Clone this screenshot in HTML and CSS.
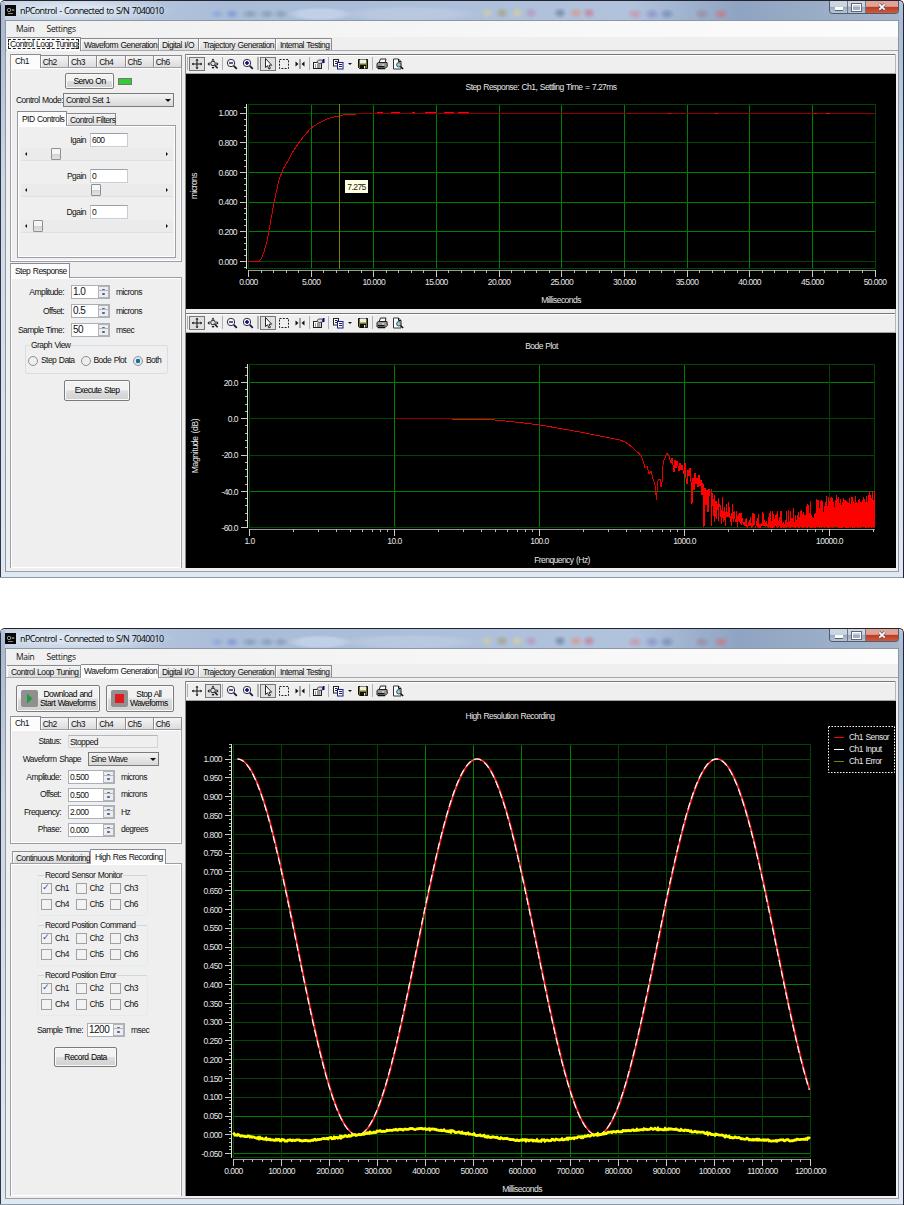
FILE: index.html
```html
<!DOCTYPE html>
<html lang="en">
<head>
  <meta charset="UTF-8">
  <title>nPControl</title>
  <link rel="stylesheet" href="styles.css">
</head>
<body>
  <!-- toolbar icons, drawn on a 16x16 grid -->
  <svg width="0" height="0" class="defs">
    <symbol id="i-pan" viewBox="0 0 16 16"><path d="M8 3.5v9M3.5 8h9" stroke="#111" fill="none"/><path d="M6.5 4.5L8 2.8l1.5 1.7zM6.5 11.5L8 13.2l1.5-1.7zM4.5 6.5L2.8 8l1.7 1.5zM11.5 6.5L13.2 8l-1.7 1.5z" fill="#111"/></symbol>
    <symbol id="i-zoomaxis" viewBox="0 0 16 16"><path d="M6.5 4.5L8 2.5l1.500 2zM4.500 6L2.500 8l2 2zM11.500 6l2 2-2 2zM6.500 11L8 13l1.500-2z" fill="#111"/><circle cx="8" cy="7.500" r="2.300" fill="#cfe3e8" stroke="#222"/><path d="M9.800 9.300l2.800 2.900" stroke="#15153a" stroke-width="1.600"/></symbol>
    <symbol id="i-zoomout" viewBox="0 0 16 16"><circle cx="7" cy="7" r="3.700" fill="#f6f6f6" stroke="#333"/><path d="M5 7h4" stroke="#00007a" stroke-width="1.300"/><path d="M9.800 9.800l3 3" stroke="#15153a" stroke-width="1.800"/></symbol>
    <symbol id="i-zoomin" viewBox="0 0 16 16"><circle cx="7" cy="7" r="3.700" fill="#f6f6f6" stroke="#333"/><path d="M5 7h4M7 5v4" stroke="#00008a" stroke-width="1.500"/><path d="M9.800 9.800l3 3" stroke="#15153a" stroke-width="1.800"/></symbol>
    <symbol id="i-cursor" viewBox="0 0 16 16"><path d="M5.500 2.500v9l2-1.800 1.400 3.300 1.500-.7-1.400-3.100h2.700z" fill="#fff" stroke="#111" stroke-width=".9"/></symbol>
    <symbol id="i-select" viewBox="0 0 16 16"><rect x="3.500" y="3.500" width="9" height="9" fill="none" stroke="#222" stroke-dasharray="2 1.300"/></symbol>
    <symbol id="i-split" viewBox="0 0 16 16"><path d="M8 3v10" stroke="#555"/><path d="M3.500 5.500L6.500 8l-3 2.500zM12.500 5.500L9.500 8l3 2.500z" fill="#111"/></symbol>
    <symbol id="i-props" viewBox="0 0 16 16"><rect x="2.500" y="6.500" width="8" height="6" fill="#fff" stroke="#222"/><path d="M4 9h1M6 9h3.500M4 11h1M6 11h3.500" stroke="#333"/><path d="M5.500 6.500l2-2.500h4v3l-3 .5z" fill="#ddd" stroke="#222" stroke-width=".8"/><path d="M12.700 3v4" stroke="#00008a" stroke-width="1.600"/></symbol>
    <symbol id="i-copy" viewBox="0 0 16 16"><rect x="3.500" y="3.500" width="5" height="6.500" fill="#fff" stroke="#222"/><path d="M5 5.500h2.500M5 7.500h2.500" stroke="#222"/><rect x="7.500" y="6.500" width="5.500" height="6.500" fill="#fff" stroke="#1a1a80"/><path d="M9 8.500h3M9 10.500h3" stroke="#1a1a80"/></symbol>
    <symbol id="i-save" viewBox="0 0 16 16"><path d="M3.500 3.500h9v9h-8l-1-1z" fill="#77771a" stroke="#111"/><rect x="5" y="3.500" width="6" height="4" fill="#eee"/><rect x="5" y="9" width="6" height="4" fill="#111"/><rect x="9" y="10" width="1.300" height="2.500" fill="#eee"/></symbol>
    <symbol id="i-print" viewBox="0 0 16 16"><path d="M5 7l1.500-4h5.500l-1 4" fill="#fff" stroke="#222"/><path d="M3 7.500l1.500-1H13l.3 4-1.800 1.500H3z" fill="#999" stroke="#222"/><path d="M4 10.500h6.500M4 12.700h7" stroke="#111" stroke-width="1.200"/><path d="M8 9h2" stroke="#eee"/></symbol>
    <symbol id="i-preview" viewBox="0 0 16 16"><path d="M3.500 3h5l2.500 2.500v7.500h-7.500z" fill="#fff" stroke="#333"/><path d="M8.500 3v2.500h2.500" fill="none" stroke="#111"/><circle cx="8.800" cy="8.800" r="2.200" fill="#7fd8dc" stroke="#444"/><path d="M10.500 10.500l2.700 2.500" stroke="#111" stroke-width="1.500"/></symbol>
  </svg>

  <div class="window">
    <div class="titlebar">
      <svg class="app-icon" viewBox="0 0 11 11"><rect width="11" height="11" fill="#080808"/><circle cx="4" cy="5" r="1.700" fill="none" stroke="#bbb" stroke-width=".8"/><path d="M6.500 5h3M8 4v2M3 8.500h5" stroke="#aaa" stroke-width=".8"/></svg>
      <span class="title">nPControl - Connected to S/N 7040010</span>
      <div class="caption"><i class="min"></i><i class="max"></i><i class="close"><svg viewBox="0 0 10 8"><path d="M2.300 1.300l5.400 5.400M7.700 1.300L2.300 6.700" stroke="#445" stroke-width="3"/><path d="M2.300 1.300l5.400 5.400M7.700 1.300L2.300 6.700" stroke="#fff" stroke-width="1.900"/></svg></i></div>
    </div>
    <div class="client">
      <div class="menu"><span>Main</span><span>Settings</span></div>
      <div class="main-tabs">
        <div class="tab t1 active focus"><span>Control Loop Tuning</span></div>
        <div class="tab t2">Waveform Generation</div>
        <div class="tab t3">Digital I/O</div>
        <div class="tab t4">Trajectory Generation</div>
        <div class="tab t5">Internal Testing</div>
      </div>
      <div class="body">
        <div class="side">
          <div class="ch-tabs"><div class="tab active">Ch1</div><div class="tab">Ch2</div><div class="tab">Ch3</div><div class="tab">Ch4</div><div class="tab">Ch5</div><div class="tab">Ch6</div></div>
          <div class="panel loop">
            <div class="servo"><button>Servo On</button><i class="led"></i></div>
            <div class="mode"><label>Control Mode:</label><div class="combo">Control Set 1</div></div>
            <div class="sub-tabs"><div class="tab active">PID Controls</div><div class="tab">Control Filters</div></div>
            <div class="panel pid">
              <div class="gain"><label>Igain</label><div class="field">600</div></div>
              <div class="slider"><i style="margin-left:30px"></i></div>
              <div class="gain"><label>Pgain</label><div class="field">0</div></div>
              <div class="slider"><i style="margin-left:70px"></i></div>
              <div class="gain"><label>Dgain</label><div class="field">0</div></div>
              <div class="slider"><i style="margin-left:12px"></i></div>
            </div>
          </div>
          <div class="step-tabs"><div class="tab active">Step Response</div></div>
          <div class="panel step">
            <div class="row"><label>Amplitude:</label><div class="spin big">1.0</div><span>microns</span></div>
            <div class="row"><label>Offset:</label><div class="spin big">0.5</div><span>microns</span></div>
            <div class="row"><label>Sample Time:</label><div class="spin big">50</div><span>msec</span></div>
            <fieldset class="view">
              <legend>Graph View</legend>
              <div class="radio">Step Data</div><div class="radio">Bode Plot</div><div class="radio on">Both</div>
            </fieldset>
            <button class="execute">Execute Step</button>
          </div>
        </div>
        <div class="graphs">
          <div class="toolbar"></div>
          <svg id="stepPlot" class="plot" width="710" height="235" viewBox="186 74 710 235"></svg>
          <div class="toolbar second"></div>
          <svg id="bodePlot" class="plot" width="710" height="235" viewBox="186 333 710 235"></svg>
        </div>
      </div>
    </div>
  </div>

  <div class="window lower">
    <div class="titlebar">
      <svg class="app-icon" viewBox="0 0 11 11"><rect width="11" height="11" fill="#080808"/><circle cx="4" cy="5" r="1.700" fill="none" stroke="#bbb" stroke-width=".8"/><path d="M6.500 5h3M8 4v2M3 8.500h5" stroke="#aaa" stroke-width=".8"/></svg>
      <span class="title">nPControl - Connected to S/N 7040010</span>
      <div class="caption"><i class="min"></i><i class="max"></i><i class="close"><svg viewBox="0 0 10 8"><path d="M2.300 1.300l5.400 5.400M7.700 1.300L2.300 6.700" stroke="#445" stroke-width="3"/><path d="M2.300 1.300l5.400 5.400M7.700 1.300L2.300 6.700" stroke="#fff" stroke-width="1.900"/></svg></i></div>
    </div>
    <div class="client">
      <div class="menu"><span>Main</span><span>Settings</span></div>
      <div class="main-tabs">
        <div class="tab t1">Control Loop Tuning</div>
        <div class="tab t2 active">Waveform Generation</div>
        <div class="tab t3">Digital I/O</div>
        <div class="tab t4">Trajectory Generation</div>
        <div class="tab t5">Internal Testing</div>
      </div>
      <div class="body">
        <div class="side">
          <div class="actions">
            <button class="start"><svg viewBox="0 0 17 17"><rect width="17" height="17" rx="2" fill="#909090"/><path d="M6 3.500l5.500 5-5.500 5z" fill="#1f9a3c"/></svg><span>Download and<br>Start Waveforms</span></button>
            <button class="stop"><svg viewBox="0 0 17 17"><rect width="17" height="17" rx="2" fill="#909090"/><rect x="4" y="4" width="9" height="9" fill="#e01b1b"/></svg><span>Stop All<br>Waveforms</span></button>
          </div>
          <div class="ch-tabs shifted"><div class="tab active">Ch1</div><div class="tab">Ch2</div><div class="tab">Ch3</div><div class="tab">Ch4</div><div class="tab">Ch5</div><div class="tab">Ch6</div></div>
          <div class="panel wave">
            <div class="row status"><label>Status:</label><div class="readonly">Stopped</div></div>
            <div class="row shape"><label>Waveform Shape</label><div class="combo">Sine Wave</div></div>
            <div class="row"><label>Amplitude:</label><div class="spin">0.500</div><span>microns</span></div>
            <div class="row"><label>Offset:</label><div class="spin">0.500</div><span>microns</span></div>
            <div class="row"><label>Frequency:</label><div class="spin">2.000</div><span>Hz</span></div>
            <div class="row"><label>Phase:</label><div class="spin">0.000</div><span>degrees</span></div>
          </div>
          <div class="rec-tabs"><div class="tab">Continuous Monitoring</div><div class="tab active">High Res Recording</div></div>
          <div class="panel rec">
            <fieldset><legend>Record Sensor Monitor</legend>
              <div class="check on">Ch1</div><div class="check">Ch2</div><div class="check">Ch3</div>
              <div class="check">Ch4</div><div class="check">Ch5</div><div class="check">Ch6</div>
            </fieldset>
            <fieldset><legend>Record Position Command</legend>
              <div class="check on">Ch1</div><div class="check">Ch2</div><div class="check">Ch3</div>
              <div class="check">Ch4</div><div class="check">Ch5</div><div class="check">Ch6</div>
            </fieldset>
            <fieldset><legend>Record Position Error</legend>
              <div class="check on">Ch1</div><div class="check">Ch2</div><div class="check">Ch3</div>
              <div class="check">Ch4</div><div class="check">Ch5</div><div class="check">Ch6</div>
            </fieldset>
            <div class="row"><label>Sample Time:</label><div class="spin big">1200</div><span>msec</span></div>
            <button class="record">Record Data</button>
          </div>
        </div>
        <div class="graphs">
          <div class="toolbar zoomed"></div>
          <svg id="wavePlot" class="plot" width="710" height="495" viewBox="186 701 710 495"></svg>
        </div>
      </div>
    </div>
  </div>

  <script src="plots.js"></script>
</body>
</html>
```
FILE: styles.css
```css
* { box-sizing: border-box; }
body {
  margin: 0;
  background: #fff;
  color: #111;
  font: 8.5px/11px "Liberation Sans", sans-serif;
  letter-spacing: -.55px;
  word-spacing: .7px;
  overflow: hidden;
}
.defs { position: absolute; }
svg { display: block; }

/* window frame */
.window {
  width: 904px;
  height: 578px;
  padding: 0 4px 6px 5px;
  border: solid #23232d;
  border-width: 1px 1px 0 0;
  border-radius: 5px 5px 0 0;
  background:
    linear-gradient(90deg, #33343c 0 1px, transparent 1px),
    linear-gradient(#b0c1d9 0, #a9bad2 22px, #cbd8ea 180px, #dfe9f5 100%);
  box-shadow: inset 0 -1px #8d99a8, inset 0 1px #e4ecf6;
}
.lower { margin-top: 50px; height: 577px; }
.titlebar {
  display: flex;
  height: 19px;
  align-items: center;
  background:
    radial-gradient(ellipse 100px 14px at 70px 9px, #e3ebf5cc 30%, transparent),
    radial-gradient(ellipse 7px 5px at 212px 13px, #6f95d877, transparent),
    radial-gradient(ellipse 7px 5px at 227px 13px, #6080d088, transparent),
    radial-gradient(ellipse 9px 5px at 245px 13px, #6d7d9877, transparent),
    radial-gradient(ellipse 8px 5px at 262px 13px, #6d7d9877, transparent),
    radial-gradient(ellipse 8px 5px at 276px 13px, #6d7d9877, transparent),
    radial-gradient(ellipse 34px 7px at 315px 13px, #c0d0e6 60%, transparent),
    radial-gradient(ellipse 72px 8px at 405px 13px, #b8c8df 60%, transparent),
    radial-gradient(ellipse 7px 6px at 482px 12px, #d9cf9baa, transparent),
    radial-gradient(ellipse 7px 6px at 497px 12px, #a39a62aa, transparent),
    radial-gradient(ellipse 7px 6px at 512px 12px, #dfd28caa, transparent),
    radial-gradient(ellipse 7px 6px at 526px 12px, #b989b8aa, transparent),
    radial-gradient(ellipse 7px 6px at 555px 12px, #627da0bb, transparent),
    radial-gradient(ellipse 7px 6px at 571px 12px, #e58d75aa, transparent),
    radial-gradient(ellipse 7px 6px at 584px 12px, #c96c83aa, transparent),
    radial-gradient(ellipse 8px 6px at 630px 13px, #d38a96aa, transparent),
    radial-gradient(ellipse 8px 6px at 647px 13px, #8085c4aa, transparent),
    radial-gradient(ellipse 8px 6px at 662px 13px, #6582b1aa, transparent),
    radial-gradient(ellipse 8px 6px at 697px 13px, #9b7f96aa, transparent),
    radial-gradient(ellipse 8px 6px at 716px 13px, #d56a72aa, transparent),
    linear-gradient(90deg, #c3d0e2, #a9bcd8 25%, #b0c2dc 70%, #8fa4c2 82%, #a5b5cc);
}
.app-icon { width: 11px; height: 11px; }
.title { margin-left: 4px; font: 9px/12px "Open Sans", sans-serif; letter-spacing: -.6px; color: #000; white-space: nowrap; }
.caption {
  display: flex;
  align-self: flex-start;
  width: 70px;
  height: 13px;
  margin-left: auto;
  border: 1px solid #515b6b;
  border-top: 0;
  border-radius: 0 0 4px 4px;
  overflow: hidden;
}
.caption i { display: flex; align-items: center; justify-content: center; width: 18px; border-right: 1px solid #6c7789; background: linear-gradient(#ccd6e3 45%, #98a8bf 50%, #b6c5d8); }
.min::before { content: ""; width: 8px; height: 3px; margin-top: 3px; background: #fff; border: 1px solid #566; border-width: 0 0 1px; }
.max::before { content: ""; width: 7px; height: 5px; border: 1.500px solid #fff; outline: .5px solid #667; }
.caption .close { flex: 1; border: 0; background: linear-gradient(#dfa497 45%, #b93a22 50%, #cf5b3e); }
.close svg { width: 10px; height: 8px; }

.client {
  height: 552px;
  display: flex;
  flex-direction: column;
  background: #efefef;
  border: 1px solid #8c97a5;
  border-bottom-color: #a0a0a0;
}
.lower .client { height: 551px; }
.menu {
  height: 16px;
  padding-left: 10px;
  display: flex;
  gap: 12px;
  font: 8.5px/15px "Open Sans", sans-serif;
  letter-spacing: -.3px;
  background: linear-gradient(90deg, #f0f0f0, #fcfcfc);
}

/* tabs */
.main-tabs, .ch-tabs, .sub-tabs, .step-tabs, .rec-tabs { display: flex; align-items: flex-end; }
.tab {
  height: 12px;
  padding-left: 3px;
  line-height: 12px;
  white-space: nowrap;
  border: solid #8a8b92;
  border-width: 1px 1px 0 0;
  box-shadow: inset 1px 0 #fff;
  background: linear-gradient(#f4f4f4, #dcdcdc);
}
.tab.active { position: relative; height: 14px; padding-left: 4px; background: #fcfcfc; }
.main-tabs { height: 14px; padding-left: 1px; border-bottom: 1px solid #a6a6ab; }
.main-tabs .tab { height: 12px; line-height: 13px; }
.main-tabs .active { height: 14px; margin-bottom: -1px; line-height: 13px; }
.t1 { width: 74px; }
.t2 { width: 78px; }
.t3 { width: 40px; }
.t4 { width: 77px; }
.t5 { width: 56px; }
.main-tabs .t1, .main-tabs .t4, .main-tabs .t5 { padding-left: 4px; }
.main-tabs .t2 { padding-left: 3px; }
.main-tabs .focus { padding: 1px 1px 0; }
.focus span { display: block; height: 10px; line-height: 9px; padding-left: 1px; border: 1px dashed #222; }
.body { display: flex; flex: 1; padding: 3px 2px 3px 4px; }
.side { width: 172px; display: flex; flex-direction: column; }
.ch-tabs .tab { width: 28.500px; padding-left: 2px; }
.ch-tabs .tab.active { width: 31px; padding-left: 4px; border-left: 1px solid #9a9aa2; }
.ch-tabs { height: 13px; }
.ch-tabs .active { margin-bottom: -1px; }
.panel { border: 1px solid #9c9da6; box-shadow: inset 1px 1px #fff, inset -1px -1px #fff; }

.side button {
  padding: 0;
  font: inherit;
  letter-spacing: inherit;
  word-spacing: inherit;
  color: #000;
  border: 1px solid #7b7b7b;
  border-radius: 2px;
  box-shadow: inset 0 0 0 1px #fafafa;
  background: linear-gradient(#f2f2f2 48%, #dedede 52%, #d0d0d0);
}

/* control loop */
.loop { height: 195px; padding: 5px 6px 0; }
.servo { display: flex; padding-left: 48px; align-items: center; gap: 4px; }
.servo button { width: 49px; height: 16px; }
.led { width: 14px; height: 7px; background: #33cc33; border: 1px solid #6d7a6d; }
.mode { display: flex; align-items: center; justify-content: space-between; margin-top: 4px; height: 14px; padding-right: 1px; white-space: nowrap; }
.mode label { margin-left: -1px; }
.combo {
  position: relative;
  width: 111px;
  height: 14px;
  padding-left: 2px;
  line-height: 13px;
  border: 1px solid #7b7b7b;
  background: linear-gradient(#f3f3f3, #d9d9d9);
}
.combo::after { content: ""; position: absolute; right: 2px; top: 5px; border: 3px solid transparent; border-top-color: #111; border-bottom: 0; }
.sub-tabs { height: 14px; margin-top: 4px; }
.sub-tabs .tab { width: 49px; }
.sub-tabs .active { width: 50px; margin-bottom: -1px; border-left: 1px solid #9a9aa2; height: 15px; line-height: 14px; }
.pid { height: 133px; width: 159px; padding: 7px 2px 0 3px; }
.gain { display: flex; align-items: center; height: 14px; }
.gain label { width: 65px; text-align: right; }
.field { width: 38px; height: 14px; margin-left: 4px; padding-left: 1px; line-height: 13px; background: #fff; border: 1px solid #c5ccd6; border-top-color: #9ba1aa; }
.slider {
  position: relative;
  height: 13px;
  width: 152px;
  margin: 1px 0 8px;
  background: #ebebeb;
  border-bottom: 1px solid #e0e0e0;
}
.slider::before, .slider::after { content: ""; position: absolute; top: 4px; border: 2.500px solid transparent; }
.slider::before { left: 4px; border-right-color: #111; border-left: 0; }
.slider::after { right: 5px; border-left-color: #111; border-right: 0; }
.slider i { display: block; width: 10px; height: 12px; border: 1px solid #8f8f8f; border-radius: 1px; background: linear-gradient(#f5f5f5 48%, #d4d4d4 52%, #e2e2e2); }

.step-tabs { margin-top: 1px; height: 14px; }
.step-tabs .tab { width: 60px; height: 15px; line-height: 14px; margin-bottom: -1px; border-left: 1px solid #9a9aa2; }
.step { flex: 1; padding-top: 7px; border-bottom: 0; }
.row { display: flex; align-items: center; height: 14px; white-space: nowrap; }
.row label { text-align: right; }
.spin {
  position: relative;
  height: 14px;
  padding-left: 1px;
  line-height: 13px;
  background: #fff;
  border: 1px solid #a9b0ba;
}
.spin.big { font-size: 10px; line-height: 12px; letter-spacing: -.5px; }
.spin::before, .spin::after { content: ""; position: absolute; right: 0; width: 9px; height: 6px; border: 1px solid #b4b4b4; background: radial-gradient(circle at 50% 50%, #4562a8 0 1px, transparent 1.500px), #ededed; }
.spin::before { top: 0; }
.spin::after { bottom: 0; }
.step .row { margin-bottom: 5px; }
.step .row label { width: 53px; }
.step .spin { width: 39px; margin: 0 6px 0 7px; }
fieldset { min-width: 0; margin: 0; padding: 0; border: 1px solid #d5dfe5; border-radius: 2px; }
legend { padding: 0 1px; margin-left: 4px; white-space: nowrap; }
.view { width: 143px; height: 34px; margin: -2px 0 0 14px; display: flex; }
.view .radio { flex: none; width: 52.500px; padding-left: 15px; line-height: 19px; position: relative; white-space: nowrap; }
.radio::before { content: ""; position: absolute; left: 2px; top: 5px; width: 8px; height: 8px; border-radius: 50%; border: 1px solid #8e8f8f; background: #eee; }
.radio.on::before { background: radial-gradient(circle, #1d6ea0 0 2px, #dce8f0 2.500px); }
.execute { display: block; width: 66px; height: 21px; margin: 6px 0 0 53px; }

/* waveform generation */
.actions { display: flex; gap: 6px; padding: 4px 0 0 6px; }
.actions button { display: flex; align-items: center; height: 27px; line-height: 9px; text-align: center; white-space: nowrap; }
.actions svg { width: 17px; height: 17px; margin: 0 2px 0 4px; flex: none; }
.start { width: 84px; }
.stop { width: 68px; }
.ch-tabs.shifted { margin: 4px 0 0; }
.wave { height: 115px; padding-top: 4px; }
.wave .row label { width: 50px; }
.wave .row { margin-bottom: 3.600px; }
.wave .spin { width: 47px; margin: 0 6px 0 7px; }
.wave .status { margin-bottom: 4px; }
.readonly { width: 90px; height: 13px; margin-left: 7px; padding-left: 1px; line-height: 12px; border: 1px solid #d4d4d4; border-top-color: #b5b5b5; }
.wave .shape { margin-bottom: 4px; }
.wave .shape label { width: 70px; }
.shape .combo { width: 71px; margin-left: 7px; }
.rec-tabs { margin-top: 5px; height: 14px; padding-left: 2px; }
.rec-tabs .tab { width: 78px; border-left: 1px solid #9a9aa2; }
.rec-tabs .active { width: 76px; height: 15px; line-height: 14px; margin-bottom: -1px; }
.rec { flex: 1; border-bottom: 0; padding: 6px 0 0 26px; }
.rec fieldset { display: grid; grid-template-columns: repeat(3, 34.500px); grid-auto-rows: 15.700px; width: 111px; height: 46px; margin-bottom: 4px; padding-left: 3px; border-color: #ccd8e0 #e6eaec #e6eaec; }
.check { display: flex; align-items: center; gap: 3px; }
.check::before { content: ""; width: 9px; height: 9px; border: 1px solid #a0a2a2; background: #f2f2f2; font: bold 9px/7px "DejaVu Sans", sans-serif; letter-spacing: 0; color: #34509a; }
.check.on::before { content: "✓"; }
.rec legend { margin-left: 3px; }
.rec .row { margin-top: 7px; }
.rec .row label { width: 43px; }
.rec .spin { width: 38px; margin: 0 6px 0 7px; }
.record { display: block; width: 63px; height: 20px; margin: 10px 0 0 17px; }

/* graphs */
.graphs { width: 711px; margin-left: 3px; border-left: 1px solid #8c8c8c; border-right: 1px solid #b5b5b5; }
.toolbar { display: flex; align-items: center; height: 20px; padding-bottom: 1px; border-top: 1px solid #777; border-bottom: 1px solid #a0a0a0; box-shadow: inset 0 1px #fff; background: #efefef; }
.toolbar.second { margin-top: 4px; }
.toolbar .tool { width: 16px; height: 14px; flex: none; border: 1px solid transparent; display: flex; align-items: center; justify-content: center; }
.toolbar .down { border-color: #777; background: #e0e0e0; }
.tool svg { width: 16px; height: 16px; flex: none; }
.sep { width: 1px; height: 13px; margin: 0 1px; background: #b0b0b0; }
.sep.wide { width: 2px; }
.caret { margin: 0 3px 0 2px; border: 2.500px solid transparent; border-top-color: #111; border-bottom: 0; }
.plot { background: #000; font-family: "Liberation Sans", sans-serif; font-size: 8.5px; letter-spacing: -.55px; word-spacing: .7px; }
.plot text { fill: #e6e6e6; }
.plot .tip { fill: #222; }
```
FILE: plots.js
```js
const NS = 'http://www.w3.org/2000/svg';
const BRIGHT = '#008000', DIM = '#004600';

function add(svg, tag, attrs, text) {
  const el = document.createElementNS(NS, tag);
  for (const k in attrs) el.setAttribute(k, attrs[k]);
  if (text) el.textContent = text;
  svg.appendChild(el);
}
function rect(svg, x, y, w, h, fill) {
  add(svg, 'rect', { x, y, width: w, height: h, fill });
}
function label(svg, x, y, text, anchor) {
  add(svg, 'text', { x, y: y + 3.2, 'text-anchor': anchor || 'middle' }, text);
}
function line(svg, pts, stroke, width, extra) {
  add(svg, 'polyline', Object.assign({ points: pts.map(p => p.join(',')).join(' '), fill: 'none', stroke, 'stroke-width': width }, extra));
}
// small seeded generator so the noise is the same on every load
let seed = 7;
function rnd() {
  seed = (seed * 16807) % 2147483647;
  return seed / 2147483647;
}
function interp(table, x) {
  for (let i = 1; i < table.length; i++) {
    if (x <= table[i][0]) {
      const a = table[i - 1], b = table[i], t = (x - a[0]) / (b[0] - a[0]);
      return a.slice(1).map((v, k) => v + (b[k + 1] - v) * t);
    }
  }
  return table[table.length - 1].slice(1);
}

// toolbars
document.querySelectorAll('.toolbar').forEach(bar => {
  const zoomed = bar.classList.contains('zoomed');
  const items = ['|', 'pan', 'zoomaxis', '|', 'zoomout', 'zoomin', '||', 'cursor', 'select', 'split', '|', 'props', '|', 'copy', 'v', 'save', '|', 'print', 'preview'];
  bar.innerHTML = items.map(n => {
    if (n === '|') return '<i class="sep"></i>';
    if (n === '||') return '<i class="sep wide"></i>';
    if (n === 'v') return '<i class="caret"></i>';
    const down = n === 'cursor' || n === (zoomed ? 'zoomaxis' : 'pan');
    return `<span class="tool${down ? ' down' : ''}"><svg><use href="#i-${n}"/></svg></span>`;
  }).join('');
});

function axes(svg, p) {
  p.ys.forEach(g => rect(svg, p.x0, Math.round(g.y - .5), p.x1 - p.x0 + 1, 1, g.hi ? BRIGHT : DIM));
  p.xs.forEach(g => rect(svg, Math.round(g.x - .5), p.y0, 1, p.y1 - p.y0 + 1, g.hi ? BRIGHT : DIM));
  [[p.x0, p.y0, p.x1 - p.x0, 1], [p.x0, p.y1, p.x1 - p.x0, 1], [p.x0, p.y0, 1, p.y1 - p.y0], [p.x1, p.y0, 1, p.y1 - p.y0 + 1]]
    .forEach(r => rect(svg, ...r, DIM));
  rect(svg, p.x0 - 2, p.y0, 1, p.y1 - p.y0 + 1, '#ddd');
  rect(svg, p.x0, p.y1 + 2, p.x1 - p.x0 + 1, 1, '#999');
  p.ys.forEach(g => {
    rect(svg, p.x0 - 8, Math.round(g.y - .5), 6, 1, '#ccc');
    label(svg, p.x0 - p.gap, g.y, g.t, 'end');
  });
  p.xs.forEach(g => {
    rect(svg, Math.round(g.x - .5), p.y1 + 2, 1, 7, '#ccc');
    label(svg, g.x, p.y1 + 14, g.t);
  });
  p.ym.forEach(y => { if (y > p.y0 && y < p.y1) rect(svg, p.x0 - 4, Math.round(y - .5), 2, 1, '#bbb'); });
  p.xm.forEach(x => { if (x < p.x1) rect(svg, Math.round(x - .5), p.y1 + 2, 1, 3, '#bbb'); });
}
function steps(from, pitch, n) {
  return Array.from({ length: n }, (_, i) => from + pitch * i);
}
const CRISP = { 'shape-rendering': 'crispEdges' };

// step response
(function () {
  const svg = document.getElementById('stepPlot');
  axes(svg, {
    x0: 248, x1: 875, y0: 104, y1: 268, gap: 11,
    ys: steps(0, 1, 6).map(i => ({ y: 261.4 - i * 29.65, t: (i * .2).toFixed(3), hi: i > 0 && i < 4 })),
    xs: steps(0, 1, 11).map(i => ({ x: 248.5 + i * 62.65, t: (i * 5).toFixed(3), hi: i > 0 && i < 10 })),
    ym: steps(261.4 - 29.65 * 6, 5.93, 40), xm: steps(248.5, 12.53, 50)
  });
  rect(svg, 356, 113, 519, 1, '#900000');
  line(svg, [[248, 261.5], [259, 261.5], [261, 259], [264, 252], [267, 241], [270, 225], [273, 208], [276, 193], [279, 180], [283, 169], [288, 161], [292, 153], [298, 144], [304, 136], [311, 128], [318, 123.5], [325, 120], [331, 117.5], [339, 116], [345, 114.5], [356, 114]], '#d80000', 1, CRISP);
  [[377, 383], [391, 400], [412, 415], [425, 436], [444, 454], [458, 469]].forEach(r => rect(svg, r[0], 112, r[1] - r[0], 1, '#f00'));
  [[668, 671], [715, 718], [813, 817], [826, 830]].forEach(r => rect(svg, r[0], 113, r[1] - r[0], 1, '#f00'));
  rect(svg, 339, 104, 1, 165, '#808000');
  rect(svg, 345, 180, 23, 13, '#ffffe1');
  add(svg, 'text', { x: 356.5, y: 190, 'text-anchor': 'middle', class: 'tip' }, '7.275');
  label(svg, 541, 87, 'Step Response: Ch1, Settling Time = 7.27ms');
  label(svg, 561, 300, 'Milliseconds');
  add(svg, 'text', { transform: 'translate(197 186) rotate(-90)', 'text-anchor': 'middle' }, 'microns');
})();

// bode plot
(function () {
  const svg = document.getElementById('bodePlot');
  const xm = [];
  for (let d = 0; d < 5; d++) for (let m = 2; m < 10; m++) xm.push(249.5 + 145 * (d + Math.log10(m)));
  axes(svg, {
    x0: 249, x1: 874, y0: 364, y1: 527, gap: 11,
    ys: steps(0, 1, 5).map(i => ({ y: 527.7 - i * 36.35, t: (i * 20 - 60).toFixed(1), hi: i === 1 || i === 4 })),
    xs: steps(0, 1, 5).map(i => ({ x: 249.5 + i * 145, t: Math.pow(10, i).toFixed(1), hi: i > 0 && i < 4 })),
    ym: steps(527.7 - 36.35 * 5, 7.27, 40), xm
  });
  rect(svg, 395, 418, 57, 1, '#900000');
  rect(svg, 452, 419, 38, 1, '#f00');
  line(svg, [[490, 419.5], [500, 420.5], [520, 422.5], [540, 425], [560, 428.5], [580, 432], [600, 436], [612, 438.5], [620, 440], [626, 442.5], [632, 447], [637, 452], [641, 455], [644, 464], [645, 468], [647, 466], [649, 474], [651, 471], [653, 479], [655, 485], [656.5, 500], [657.5, 482], [659, 479], [660, 479], [661, 487], [662, 482], [663, 465], [664, 460], [667, 453], [669, 456]], '#e00000', 1, CRISP);
  // single strokes up to where the noise reaches the floor
  const pts = [[669, 456], [671, 463], [672, 458], [674, 472], [675, 460], [676, 468], [677, 461], [678, 466], [679, 471], [680, 463], [681, 470], [682, 465], [684, 474], [685, 463], [686, 478], [687, 484], [688, 470], [689, 476], [690, 468], [691, 482], [692, 504], [693, 478], [694, 490], [695, 473], [696, 484], [697, 478], [698, 487], [699, 475], [700, 486], [701, 480], [702, 495], [703, 483], [704, 527], [705, 488], [706, 505], [707, 490], [708, 512], [709, 489], [710, 496]];
  line(svg, pts, '#f00', 1, CRISP);
  // then one bar per pixel: x, highest top, lowest top, highest bottom
  const env = [[711, 489, 500, 500], [722, 495, 512, 508], [735, 505, 520, 518], [748, 512, 526, 525], [775, 511, 526, 526], [790, 505, 523, 527], [805, 500, 520, 527], [815, 499, 518, 527], [828, 495, 508, 527], [850, 494, 504, 527], [868, 492, 503, 527], [875, 488, 500, 527]];
  for (let x = 711; x < 875; x++) {
    const [hi, lo, floor] = interp(env, x);
    const top = Math.round(hi + (lo - hi) * rnd());
    const bottom = Math.max(top + 3, Math.round(floor + (528 - floor) * rnd()));
    rect(svg, x, top, 1, Math.min(528, bottom) - top, '#f00');
  }
  label(svg, 541.5, 346, 'Bode Plot');
  label(svg, 562, 560, 'Frenquency (Hz)');
  add(svg, 'text', { transform: 'translate(198 446) rotate(-90)', 'text-anchor': 'middle', style: 'letter-spacing:-.3px' }, 'Magnitude (dB)');
})();

// high resolution recording
(function () {
  const svg = document.getElementById('wavePlot');
  axes(svg, {
    x0: 233, x1: 810, y0: 744, y1: 1157, gap: 11,
    ys: steps(-1, 1, 22).map(i => ({ y: 1134.8 - i * 18.78, t: (i * .05).toFixed(3), hi: i === -1 || i === 1 || i === 8 || i === 13 })),
    xs: steps(0, 1, 13).map(i => ({ x: 233.5 + i * 48.08, t: (i * 100).toFixed(3), hi: i > 3 && i < 8 })),
    ym: steps(1134.8 - 18.78 * 21, 3.756, 112), xm: steps(233.5, 9.616, 60)
  });
  const wave = [], err = [];
  for (let x = 238; x <= 810; x++) wave.push([x, (947 - 188 * Math.cos((x - 238) / 239.6 * 2 * Math.PI)).toFixed(2)]);
  for (let x = 233; x <= 810; x++) err.push([x, (1134.8 + 5.8 * Math.sin((x - 236) / 240 * 2 * Math.PI) + (rnd() - .5) * 1.6).toFixed(2)]);
  line(svg, wave, '#ff0000', 1.6);
  line(svg, wave.map(p => [p[0] - .7, p[1]]), '#fff', 1.2, { 'stroke-dasharray': '7 4' });
  line(svg, wave.map(p => [p[0] - .7, p[1]]), '#fff', .5);
  line(svg, err, '#ffff00', 2.8);
  label(svg, 510, 716, 'High Resolution Recording');
  label(svg, 522, 1189, 'Milliseconds');
  add(svg, 'rect', { x: 828.5, y: 726.5, width: 66, height: 46, fill: 'none', stroke: '#fff', 'stroke-dasharray': '1.5 1.5' });
  [['Ch1 Sensor', '#f00'], ['Ch1 Input', '#fff'], ['Ch1 Error', '#808000']].forEach((s, i) => {
    rect(svg, 834, 737 + i * 12, 10, 1, s[1]);
    label(svg, 849, 737 + i * 12, s[0], 'start');
  });
})();
```
